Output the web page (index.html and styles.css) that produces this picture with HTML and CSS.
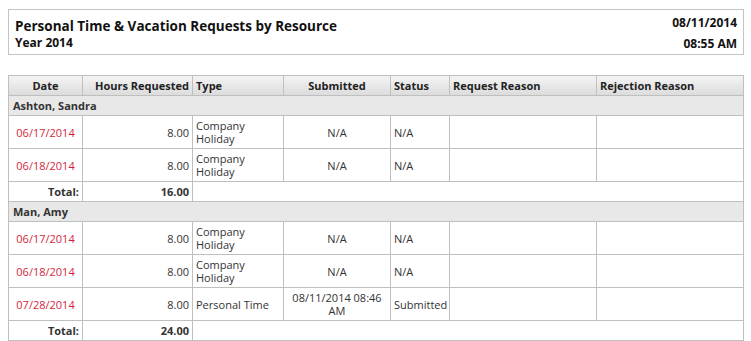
FILE: index.html
```html
<!DOCTYPE html>
<html>
<head>
<meta charset="utf-8">
<link rel="stylesheet" href="styles.css">
</head>
<body>
<div class="report-head">
  <div class="titles">
    <div class="title">Personal Time &amp; Vacation Requests by Resource</div>
    <div class="subtitle">Year 2014</div>
  </div>
  <div class="stamp">
    <div>08/11/2014</div>
    <div>08:55 AM</div>
  </div>
</div>
<div class="grid-wrap">
<table class="grid">
  <colgroup>
    <col class="c-date"><col class="c-hours"><col class="c-type"><col class="c-sub"><col class="c-status"><col class="c-req"><col class="c-rej">
  </colgroup>
  <thead>
    <tr>
      <th class="center">Date</th>
      <th class="right">Hours Requested</th>
      <th class="left">Type</th>
      <th class="center">Submitted</th>
      <th class="left">Status</th>
      <th class="left">Request Reason</th>
      <th class="left">Rejection Reason</th>
    </tr>
  </thead>
  <tbody>
    <tr class="group"><td colspan="7">Ashton, Sandra</td></tr>
    <tr class="row2">
      <td class="center date">06/17/2014</td><td class="right">8.00</td><td class="left">Company Holiday</td><td class="center">N/A</td><td class="left">N/A</td><td></td><td></td>
    </tr>
    <tr class="row2">
      <td class="center date">06/18/2014</td><td class="right">8.00</td><td class="left">Company Holiday</td><td class="center">N/A</td><td class="left">N/A</td><td></td><td></td>
    </tr>
    <tr class="total">
      <td class="right">Total:</td><td class="right">16.00</td><td colspan="5" class="open"></td>
    </tr>
    <tr class="group"><td colspan="7">Man, Amy</td></tr>
    <tr class="row2">
      <td class="center date">06/17/2014</td><td class="right">8.00</td><td class="left">Company Holiday</td><td class="center">N/A</td><td class="left">N/A</td><td></td><td></td>
    </tr>
    <tr class="row2">
      <td class="center date">06/18/2014</td><td class="right">8.00</td><td class="left">Company Holiday</td><td class="center">N/A</td><td class="left">N/A</td><td></td><td></td>
    </tr>
    <tr class="row2">
      <td class="center date">07/28/2014</td><td class="right">8.00</td><td class="left">Personal Time</td><td class="center">08/11/2014 08:46 AM</td><td class="left">Submitted</td><td></td><td></td>
    </tr>
    <tr class="total">
      <td class="right">Total:</td><td class="right">24.00</td><td colspan="5" class="open"></td>
    </tr>
  </tbody>
</table>
</div>
</body>
</html>
```
FILE: styles.css
```css
html, body { background: #fff; }
body {
  margin: 9px 7px 0 8px;
  font-family: "Open Sans", "Liberation Sans", sans-serif;
  color: #333;
  font-size: 11px;
}
.report-head {
  display: flex;
  justify-content: space-between;
  border: 1px solid #c4c4c4;
  padding: 6px 6px 5px 6px;
  height: 33px;
}
.title {
  font-size: 13.5px;
  font-weight: bold;
  color: #111;
  line-height: 18px;
  margin-top: 1px;
}
.subtitle {
  font-size: 12px;
  font-weight: bold;
  color: #111;
  line-height: 15px;
}
.stamp {
  text-align: right;
  font-size: 12px;
  font-weight: bold;
  color: #111;
  line-height: 21px;
  margin-top: -4px;
}
.grid-wrap {
  margin-top: 20px;
  border: 1px solid #bfbfbf;
  border-bottom: 0;
  overflow: hidden;
}
.grid {
  width: 100%;
  border-collapse: separate;
  border-spacing: 0;
  table-layout: fixed;
}
.c-date { width: 74px; }
.c-hours { width: 110px; }
.c-type { width: 91px; }
.c-sub { width: 107px; }
.c-status { width: 59px; }
.c-req { width: 147px; }
.c-rej { width: auto; }
.grid th, .grid td {
  box-sizing: border-box;
  border-right: 1px solid #bfbfbf;
  border-bottom: 1px solid #bfbfbf;
  padding: 0 3px;
  line-height: 13px;
}
.grid th:last-child, .grid td:last-child { border-right: 0; }
.grid th {
  height: 20px;
  font-weight: bold;
  color: #222;
  background: linear-gradient(#f4f4f4, #dcdcdc);
  white-space: nowrap;
  overflow: hidden;
}
.center { text-align: center; }
.right { text-align: right; }
.left { text-align: left; }
.group td {
  background: #e8e8e8;
  font-weight: bold;
  height: 20px;
  padding-left: 4px;
}
.row2 td { height: 33px; }
.date { color: #d41f3c; }
.total td { height: 20px; font-weight: bold; }
```
